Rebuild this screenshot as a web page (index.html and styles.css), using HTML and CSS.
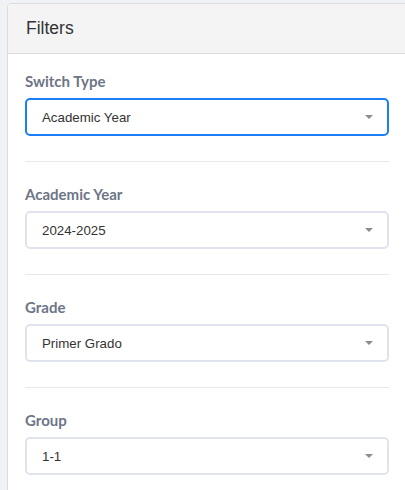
FILE: index.html
```html
<!DOCTYPE html>
<html lang="en">
<head>
<meta charset="utf-8">
<title>Filters</title>
<link rel="stylesheet" href="styles.css">
</head>
<body>
<div class="card">
  <div class="card-header">Filters</div>
  <div class="card-body">
    <div class="field">
      <div class="label">Switch Type</div>
      <div class="select focused"><span>Academic Year</span><i class="caret"></i></div>
    </div>
    <hr class="divider">
    <div class="field">
      <div class="label">Academic Year</div>
      <div class="select"><span>2024-2025</span><i class="caret"></i></div>
    </div>
    <hr class="divider">
    <div class="field">
      <div class="label">Grade</div>
      <div class="select"><span>Primer Grado</span><i class="caret"></i></div>
    </div>
    <hr class="divider">
    <div class="field">
      <div class="label">Group</div>
      <div class="select"><span>1-1</span><i class="caret"></i></div>
    </div>
  </div>
</div>
</body>
</html>
```
FILE: styles.css
```css
html, body {
  margin: 0;
  padding: 0;
  background: #f1f2f6;
  overflow: hidden;
}
body {
  padding: 3px 0 0 7px;
  font-family: "Liberation Sans", Arial, sans-serif;
}
.card {
  width: 400px;
  background: #ffffff;
  border: 1px solid #dcdcdc;
  border-radius: 4px;
  overflow: hidden;
}
.card-header {
  height: 49px;
  line-height: 49px;
  padding: 0 18px;
  background: #f4f4f4;
  border-bottom: 1px solid #dcdcdc;
  font-size: 17.5px;
  color: #333333;
}
.card-body {
  padding: 18px 17px 20px 17px;
  width: 364px;
}
.label {
  font-family: Lato, "Liberation Sans", sans-serif;
  font-weight: 700;
  font-size: 15px;
  line-height: 18px;
  color: #6d7586;
  margin-bottom: 8px;
}
.select {
  box-sizing: border-box;
  height: 38px;
  border: 2px solid #e0e3ee;
  border-radius: 5px;
  display: flex;
  align-items: center;
  justify-content: space-between;
  padding: 0 14px 0 15px;
  font-size: 13.3px;
  color: #333333;
}
.select.focused {
  border-color: #1a7ff2;
}
.caret {
  width: 0;
  height: 0;
  border-left: 4px solid transparent;
  border-right: 4px solid transparent;
  border-top: 4px solid #8c8c8c;
}
.divider {
  border: 0;
  border-top: 1px solid #e9e9ec;
  margin: 25px 0 23px 0;
}
```
